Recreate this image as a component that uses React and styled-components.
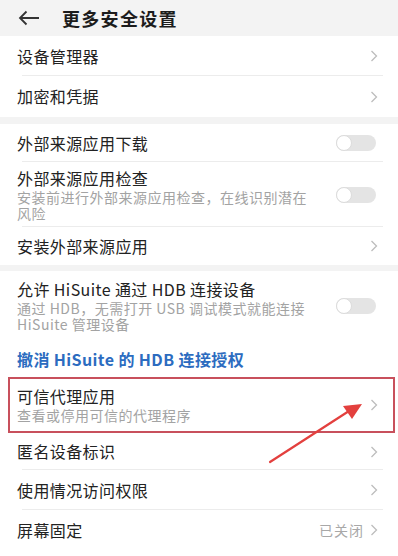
import React from 'react'
import styled, { createGlobalStyle } from 'styled-components'

const Global = createGlobalStyle`
  body {
    margin: 0;
    background: #fff;
    font-family: "Noto Sans CJK SC", "Noto Sans", sans-serif;
  }
`

const Page = styled.div`
  width: 398px;
  height: 556px;
  overflow: hidden;
  position: relative;
  background: #fff;
`

const Header = styled.div`
  height: 36px;
  background: #f3f3f3;
  display: flex;
  align-items: center;
  padding-left: 18px;
  gap: 22px;
`

const Title = styled.h1`
  margin: 0;
  font-size: 18px;
  font-weight: 700;
  letter-spacing: 1.3px;
  color: #1c1c1c;
`

const Group = styled.div`
  background: #fff;
`

const Gap = styled.div`
  height: ${p => p.h || 7}px;
  background: #f3f3f3;
`

const Row = styled.div`
  position: relative;
  display: flex;
  align-items: center;
  height: ${p => p.h}px;
  padding: 0 20px 0 17px;
  box-sizing: border-box;

  &::after {
    content: '';
    display: ${p => (p.last ? 'none' : 'block')};
    position: absolute;
    left: 22px;
    right: 15px;
    bottom: 0;
    height: 1px;
    background: #ececec;
  }
`

const Highlight = styled(Row)`
  &::before {
    content: '';
    position: absolute;
    left: 8px;
    right: 3px;
    top: 0;
    bottom: 0;
    border: 2px solid #c8505c;
  }
`

const Texts = styled.div`
  flex: 1;
  display: flex;
  flex-direction: column;
  gap: 1px;
`

const Label = styled.div`
  font-size: 16px;
  line-height: 19px;
  letter-spacing: 0.4px;
  color: ${p => (p.link ? '#2c6cc0' : '#222')};
  font-weight: ${p => (p.link ? 600 : 400)};
`

const Sub = styled.div`
  font-size: 14px;
  line-height: 16px;
  letter-spacing: 0.5px;
  color: #a3a3a3;
  max-width: 300px;
`

const Value = styled.span`
  font-size: 14px;
  color: #a8a8a8;
  letter-spacing: 1px;
  margin-right: 6px;
`

const Track = styled.div`
  width: 40px;
  height: 16px;
  border-radius: 8px;
  background: #e4e4e4;
  position: relative;
  margin-right: 2px;
  flex-shrink: 0;
`

const Knob = styled.div`
  position: absolute;
  left: 0;
  top: 0;
  width: 14px;
  height: 14px;
  border-radius: 50%;
  background: #fff;
  border: 1px solid #dcdcdc;
`

const Chevron = () => (
  <svg width="8" height="12" viewBox="0 0 8 12">
    <path d="M1.5 1l5 5-5 5" fill="none" stroke="#bdbdbd" strokeWidth="1.3" />
  </svg>
)

const Toggle = () => (
  <Track>
    <Knob />
  </Track>
)

const Arrow = styled.svg`
  position: absolute;
  left: 0;
  top: 0;
  pointer-events: none;
`

export default function App() {
  return (
    <Page>
      <Global />
      <Header>
        <svg width="22" height="16" viewBox="0 0 22 16">
          <path d="M21 8H2M8.5 1.5L2 8l6.5 6.5" fill="none" stroke="#333" strokeWidth="1.8" />
        </svg>
        <Title>更多安全设置</Title>
      </Header>

      <Group>
        <Row h={40}>
          <Texts><Label>设备管理器</Label></Texts>
          <Chevron />
        </Row>
        <Row h={41} last>
          <Texts><Label>加密和凭据</Label></Texts>
          <Chevron />
        </Row>
      </Group>
      <Gap h={7} />

      <Group>
        <Row h={38}>
          <Texts><Label>外部来源应用下载</Label></Texts>
          <Toggle />
        </Row>
        <Row h={65}>
          <Texts>
            <Label>外部来源应用检查</Label>
            <Sub>安装前进行外部来源应用检查，在线识别潜在风险</Sub>
          </Texts>
          <Toggle />
        </Row>
        <Row h={38} last>
          <Texts><Label>安装外部来源应用</Label></Texts>
          <Chevron />
        </Row>
      </Group>
      <Gap h={6} />

      <Group>
        <Row h={70} last>
          <Texts>
            <Label>允许 HiSuite 通过 HDB 连接设备</Label>
            <Sub>通过 HDB，无需打开 USB 调试模式就能连接 HiSuite 管理设备</Sub>
          </Texts>
          <Toggle />
        </Row>
        <Row h={36} last>
          <Texts><Label link>撤消 HiSuite 的 HDB 连接授权</Label></Texts>
        </Row>
        <Highlight h={56} last>
          <Texts>
            <Label>可信代理应用</Label>
            <Sub>查看或停用可信的代理程序</Sub>
          </Texts>
          <Chevron />
        </Highlight>
        <Row h={37}>
          <Texts><Label>匿名设备标识</Label></Texts>
          <Chevron />
        </Row>
        <Row h={40}>
          <Texts><Label>使用情况访问权限</Label></Texts>
          <Chevron />
        </Row>
        <Row h={40} last>
          <Texts><Label>屏幕固定</Label></Texts>
          <Value>已关闭</Value>
          <Chevron />
        </Row>
      </Group>

      <Arrow width="398" height="556" viewBox="0 0 398 556">
        <path d="M270 462 L349 411" stroke="#e3403e" strokeWidth="2.2" strokeLinecap="round" />
        <path d="M362 404 L343 406 L352 419 Z" fill="#e3403e" />
      </Arrow>
    </Page>
  )
}
